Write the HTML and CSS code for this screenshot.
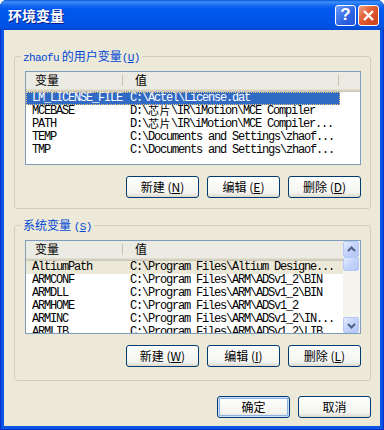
FILE: index.html
```html
<!DOCTYPE html>
<html>

<head>
  <meta charset="utf-8">
  <link rel="stylesheet" href="styles.css">
</head>

<body>
  <div class="window">
    <div class="titlebar">
      <span class="title">环境变量</span>
      <span class="caption-buttons">
        <span class="cap help">?</span>
        <span class="cap close">
          <svg width="19" height="19" viewBox="0 0 19 19"><path d="M5 5L14 14M14 5L5 14"/></svg>
        </span>
      </span>
    </div>

    <div class="client">
      <fieldset class="group">
        <legend><span class="mono">zhaofu</span> 的用户变量<span class="mono">(<u>U</u>)</span></legend>
        <div class="list">
          <div class="list-head">
            <span class="col name">变量</span>
            <span class="col value">值</span>
            <span class="col rest"></span>
          </div>
          <div class="row selected">
            <span class="cell name">LM_LICENSE_FILE</span>
            <span class="cell value">C:\Actel\License.dat</span>
          </div>
          <div class="row">
            <span class="cell name">MCEBASE</span>
            <span class="cell value">D:\<span class="zh">芯片</span>\IR\iMotion\MCE Compiler</span>
          </div>
          <div class="row">
            <span class="cell name">PATH</span>
            <span class="cell value">D:\<span class="zh">芯片</span>\IR\iMotion\MCE Compiler...</span>
          </div>
          <div class="row">
            <span class="cell name">TEMP</span>
            <span class="cell value">C:\Documents and Settings\zhaof...</span>
          </div>
          <div class="row">
            <span class="cell name">TMP</span>
            <span class="cell value">C:\Documents and Settings\zhaof...</span>
          </div>
        </div>
        <div class="buttons">
          <span class="btn">新建 (<u>N</u>)</span>
          <span class="btn">编辑 (<u>E</u>)</span>
          <span class="btn">删除 (<u>D</u>)</span>
        </div>
      </fieldset>

      <fieldset class="group system">
        <legend>系统变量 <span class="mono">(<u>S</u>)</span></legend>
        <div class="list scrolled">
          <div class="list-main">
            <div class="list-head">
              <span class="col name">变量</span>
              <span class="col value fill">值</span>
            </div>
            <div class="row inactive">
              <span class="cell name">AltiumPath</span>
              <span class="cell value fill">C:\Program Files\Altium Designe...</span>
            </div>
            <div class="row">
              <span class="cell name">ARMCONF</span>
              <span class="cell value fill">C:\Program Files\ARM\ADSv1_2\BIN</span>
            </div>
            <div class="row">
              <span class="cell name">ARMDLL</span>
              <span class="cell value fill">C:\Program Files\ARM\ADSv1_2\BIN</span>
            </div>
            <div class="row">
              <span class="cell name">ARMHOME</span>
              <span class="cell value fill">C:\Program Files\ARM\ADSv1_2</span>
            </div>
            <div class="row">
              <span class="cell name">ARMINC</span>
              <span class="cell value fill">C:\Program Files\ARM\ADSv1_2\IN...</span>
            </div>
            <div class="row">
              <span class="cell name">ARMLIB</span>
              <span class="cell value fill">C:\Program Files\ARM\ADSv1_2\LIB</span>
            </div>
          </div>
          <div class="scrollbar">
            <span class="sb-btn">
              <svg width="13" height="13" viewBox="0 0 13 13"><path d="M3 8L6.5 4.5L10 8"/></svg>
            </span>
            <span class="sb-thumb"></span>
            <span class="sb-track"></span>
            <span class="sb-btn">
              <svg width="13" height="13" viewBox="0 0 13 13"><path d="M3 5L6.5 8.5L10 5"/></svg>
            </span>
          </div>
        </div>
        <div class="buttons">
          <span class="btn">新建 (<u>W</u>)</span>
          <span class="btn">编辑 (<u>I</u>)</span>
          <span class="btn">删除 (<u>L</u>)</span>
        </div>
      </fieldset>

      <div class="buttons footer">
        <span class="btn default">确定</span>
        <span class="btn">取消</span>
      </div>
    </div>
  </div>
</body>

</html>
```

FILE: styles.css
```css
* {
  box-sizing: border-box;
}
body {
  margin: 0;
  background: #fff;
  font-family: "Noto Sans CJK SC", sans-serif;
  font-size: 12px;
}

.window {
  width: 384px;
  height: 430px;
  display: flex;
  flex-direction: column;
  background: #0855e6;
  border-radius: 7px 7px 0 0;
  box-shadow: inset 1px 0 #0a2fc8, inset -1px 0 #0a2fc8, inset 0 -1px #0a2fc8;
  overflow: hidden;
}

/* Title bar */
.titlebar {
  height: 30px;
  flex: none;
  display: flex;
  align-items: center;
  padding: 0 5px 0 8px;
  border-radius: 7px 7px 0 0;
  background: linear-gradient(#0a58d8 0, #3d8ff8 2px, #1a6cf0 5px, #0058ee 9px, #0056ea 60%, #0052e2 88%, #0347d0 100%);
}
.title {
  flex: 1;
  color: #fff;
  font-weight: bold;
  font-size: 14px;
  line-height: 16px;
  text-shadow: 1px 1px #0a1b8a;
}
.caption-buttons {
  display: flex;
  gap: 2px;
}
.cap {
  width: 21px;
  height: 21px;
  border: 1px solid #fff;
  border-radius: 3px;
  display: flex;
  align-items: center;
  justify-content: center;
}
.help {
  background: linear-gradient(135deg, #6d9cf8, #2d63e2 60%, #2157d8);
  color: #fff;
  font: bold 17px "Liberation Sans", sans-serif;
}
.close {
  background: linear-gradient(135deg, #f0a080, #e25a30 45%, #c8401c);
}
.close path {
  stroke: #fff;
  stroke-width: 2.4;
}

/* Dialog body */
.client {
  flex: 1;
  margin: 0 4px 4px;
  background: #ece9d8;
  padding: 20px 9px 0 10px;
  display: flex;
  flex-direction: column;
}

.group {
  margin: 0;
  padding: 9px 9px 10px 10px;
  border: 1px solid #d0d0bf;
  border-radius: 3px;
  min-width: 0;
}
.group.system {
  margin-top: 10px;
  padding-bottom: 13px;
}
.group legend {
  margin-left: -4px;
  padding: 0 2px;
  line-height: 12px;
  height: 12px;
  color: #0046d5;
}
.mono {
  font: 11px "Liberation Mono", monospace;
  letter-spacing: -0.6px;
}

/* List views */
.list {
  height: 94px;
  border: 1px solid #7f9db9;
  background: #fff;
  overflow: hidden;
}
.list.scrolled {
  display: flex;
}
.list-main {
  flex: 1;
  min-width: 0;
}
.list-head {
  display: flex;
  height: 20px;
  padding-bottom: 3px;
  background: #ebeae3;
  border-bottom: 1px solid #cbc7b8;
  box-shadow: inset 0 -1px #d6d2c2, inset 0 -2px #e2decd;
  line-height: 16px;
}
.col {
  padding-left: 9px;
  background: linear-gradient(#c7c5b2, #c7c5b2) no-repeat right 1px top 3px / 1px 11px;
}
.col.value {
  padding-left: 11px;
}
.col.fill {
  flex: 1;
  background: none;
}
.col.rest {
  flex: 1;
  background: none;
}
.name {
  width: 98px;
  flex: none;
}
.value {
  width: 216px;
  flex: none;
}
.value.fill {
  flex: 1;
}

.row {
  display: flex;
  height: 13px;
  font: 12px "Liberation Mono", monospace;
  letter-spacing: -1.2px;
  color: #000;
}
.cell {
  display: block;
  height: 13px;
  line-height: 13px;
  padding-left: 6px;
  white-space: nowrap;
  overflow: hidden;
}
.zh {
  font-family: "Noto Sans CJK SC", sans-serif;
  font-size: 11px;
  line-height: 11px;
  letter-spacing: 0.5px;
  vertical-align: -1px;
}
.row.selected .cell {
  background: #316ac5;
  color: #fff;
}
.row.selected {
  width: 314px;
  outline: 1px dotted #e8c880;
  outline-offset: -1px;
}
.row.inactive {
  background: #ece9d8;
}

/* Scrollbar */
.scrollbar {
  width: 17px;
  flex: none;
  display: flex;
  flex-direction: column;
  background: #f5f4ef;
  padding: 0 1px 0 0;
}
.sb-btn,
.sb-thumb {
  height: 16px;
  flex: none;
  border: 1px solid #b6c9f4;
  border-radius: 2px;
  background: linear-gradient(135deg, #e3ebfe, #c3d3fb 50%, #b3c6f6);
  display: flex;
  align-items: center;
  justify-content: center;
}
.sb-thumb {
  height: 14px;
}
.sb-track {
  flex: 1;
}
.sb-btn path {
  fill: none;
  stroke: #4d6185;
  stroke-width: 2;
}

/* Push buttons */
.buttons {
  display: flex;
  justify-content: flex-end;
  gap: 8px;
  margin-top: 11px;
}
.buttons.footer {
  margin-top: 15px;
}
.btn {
  width: 73px;
  height: 22px;
  border: 1px solid #003c74;
  border-radius: 3px;
  background: linear-gradient(#fff, #f3f3ef 80%, #dcd7cb);
  display: flex;
  align-items: center;
  justify-content: center;
  line-height: 14px;
  color: #000;
}
.btn.default {
  box-shadow: inset 0 0 0 1px #cee0fb, inset 0 0 0 2px #8fb1e8;
}
```
